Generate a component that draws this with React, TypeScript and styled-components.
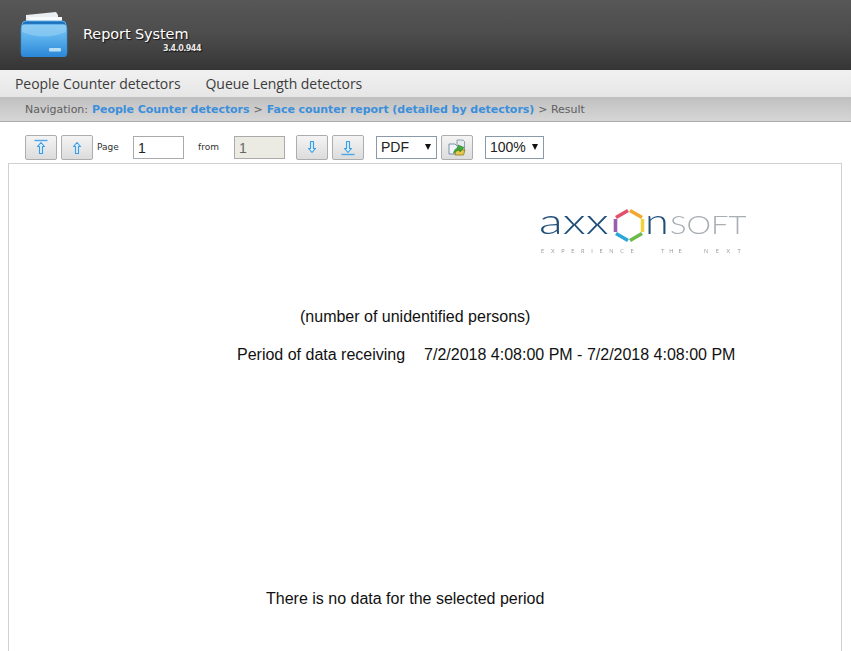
import React from 'react';
import styled, { createGlobalStyle } from 'styled-components';

const GlobalStyles = createGlobalStyle`
    html, body {
        margin: 0;
        padding: 0;
        background: #fff;
        overflow: hidden;
    }
`

const FolderLogo: React.FC = () => (
    <svg width="50" height="46" viewBox="0 0 50 46">
        <defs>
            <linearGradient id="folderBody" x1="0" y1="0" x2="0" y2="1">
                <stop offset="0" stopColor="#7cc4f2" />
                <stop offset="0.45" stopColor="#58aeea" />
                <stop offset="1" stopColor="#2a86d8" />
            </linearGradient>
        </defs>
        <path d="M6 12 L6 4 L36 1 L38 4 L38 12 Z" fill="#e9eef2" />
        <path d="M9 12 L9 6 L42 6 L42 12 Z" fill="#f7f9fa" />
        <path d="M2 18 L2 14 Q2 10 6 10 L42 10 Q46 10 46 14 L46 18 Z" fill="#1f6fb8" stroke="#5ab0ea" strokeWidth="1" />
        <rect x="1" y="13" width="46" height="33" rx="4" fill="url(#folderBody)" stroke="#2f8edc" strokeWidth="0.6" />
        <path d="M2 14 L46 14 L46 21 Q24 30 2 21 Z" fill="#9ad3f6" opacity="0.55" />
        <rect x="29" y="37" width="12" height="3.5" rx="1" fill="#b7def6" />
    </svg>
)

const ArrowIcon: React.FC<{ down?: boolean; bar?: boolean }> = ({ down, bar }) => (
    <svg width="14" height="17" viewBox="0 0 14 17">
        <g transform={down ? 'rotate(180 7 8.5)' : undefined}>
            {bar && <path d="M0.5 1.5 H13.5" stroke="#4aa6e8" strokeWidth="1.4" fill="none" />}
            <path
                d="M7 3.5 L3.5 7.5 H5.5 V14.5 H8.5 V7.5 H10.5 Z"
                fill="#d8effd"
                stroke="#3a9ce4"
                strokeWidth="1.1"
                strokeLinejoin="round"
            />
        </g>
    </svg>
)

const ExportIcon: React.FC = () => (
    <svg width="18" height="18" viewBox="0 0 18 18">
        <path d="M9 1 H15 L16.5 2.5 V11 H9 Z" fill="#e4ecf2" stroke="#7d8a94" strokeWidth="0.8" />
        <path d="M1 5 H7 L9.5 7.5 V15 H1 Z" fill="#eef4fa" stroke="#5f7890" strokeWidth="0.8" />
        <path d="M7 16 L8 11 H17 L15.5 16 Z" fill="#e6c84e" stroke="#8f7a25" strokeWidth="0.8" />
        <path d="M5.5 14.5 C6 11 8 9 10.5 8.5 L10 6 L16 8.5 L12 13 L11.5 10.8 C9.5 11 7.5 12.5 5.5 14.5 Z" fill="#3fae32" stroke="#27761f" strokeWidth="0.6" />
    </svg>
)

const AxxonLogo: React.FC = () => (
    <svg width="212" height="66" viewBox="0 -12 212 66">
        <g style={{ filter: 'blur(0.4px)' }}>
            <LogoWord transform="translate(3 27) scale(1.36 1)" fontSize="36" fontWeight="300" fill="#1f4e79">axx</LogoWord>
            <g fill="none" strokeWidth="3.6" strokeLinecap="butt">
                <path d="M92 3.5 L80 10.5" stroke="#e2506a" />
                <path d="M94 3.5 L106 10.5" stroke="#f2a72e" />
                <path d="M106.5 12 L106.5 25" stroke="#f0d23c" />
                <path d="M106 26.5 L94 33.5" stroke="#6cbb4a" />
                <path d="M92 33.5 L80 26.5" stroke="#2aa7d8" />
                <path d="M79.5 25 L79.5 12" stroke="#9a5db0" />
            </g>
            <LogoWord transform="translate(109 27) scale(1.2 1)" fontSize="36" fontWeight="300" fill="#1f4e79">n</LogoWord>
            <LogoWord transform="translate(134 27) scale(1.24 1)" fontSize="25" fontWeight="300" fill="#a9aeb3">SOFT</LogoWord>
            <LogoTag x="5" y="46" letterSpacing="6.7">EXPERIENCE</LogoTag>
            <LogoTag x="125" y="46" letterSpacing="5">THE</LogoTag>
            <LogoTag x="168" y="46" letterSpacing="7.5">NEXT</LogoTag>
        </g>
    </svg>
)

const App: React.FC = () => {
    return (
        <Root>
            <GlobalStyles />
            <Header>
                <LogoSlot>
                    <FolderLogo />
                </LogoSlot>
                <Brand>
                    <BrandTitle>Report System</BrandTitle>
                    <BrandVersion>3.4.0.944</BrandVersion>
                </Brand>
            </Header>
            <Menu>
                <MenuItem>People Counter detectors</MenuItem>
                <MenuItem>Queue Length detectors</MenuItem>
            </Menu>
            <Breadcrumbs>
                <span>Navigation:</span>
                <CrumbLink>People Counter detectors</CrumbLink>
                <span>&gt;</span>
                <CrumbLink>Face counter report (detailed by detectors)</CrumbLink>
                <span>&gt; Result</span>
            </Breadcrumbs>
            <Toolbar>
                <ToolButton><ArrowIcon bar /></ToolButton>
                <ToolButton $left={4}><ArrowIcon /></ToolButton>
                <SmallLabel $left={4} $width={36}>Page</SmallLabel>
                <PageInput defaultValue="1" />
                <SmallLabel $left={14} $width={36}>from</SmallLabel>
                <PageInput defaultValue="1" disabled />
                <ToolButton $left={11}><ArrowIcon down /></ToolButton>
                <ToolButton $left={4}><ArrowIcon down bar /></ToolButton>
                <FakeSelect $left={12} $width={61}>
                    PDF
                    <Caret />
                </FakeSelect>
                <ToolButton $left={4}><ExportIcon /></ToolButton>
                <FakeSelect $left={12} $width={59}>
                    100%
                    <Caret />
                </FakeSelect>
            </Toolbar>
            <ReportPage>
                <LogoRow>
                    <AxxonLogo />
                </LogoRow>
                <ReportLine $left={291} $top={47}>(number of unidentified persons)</ReportLine>
                <ReportLine $left={228} $top={20}>
                    Period of data receiving
                    <PeriodValue>7/2/2018 4:08:00 PM - 7/2/2018 4:08:00 PM</PeriodValue>
                </ReportLine>
                <ReportLine $left={257} $top={226}>There is no data for the selected period</ReportLine>
            </ReportPage>
        </Root>
    );
}

export default App;

const LogoWord = styled.text`
    font-family: Lato, sans-serif;
`

const LogoTag = styled.text`
    font-family: Lato, sans-serif;
    font-size: 5.5px;
    fill: #9a9ea2;
`

const Root = styled.div`
    width: 851px;
    height: 651px;
    overflow: hidden;
    background: #fff;
    display: flex;
    flex-direction: column;
`

const Header = styled.div`
    height: 70px;
    flex: none;
    display: flex;
    background: linear-gradient(to bottom, #575757 0%, #4c4c4c 50%, #353535 100%);
`

const LogoSlot = styled.div`
    margin: 11px 0 0 20px;
    height: 46px;
`

const Brand = styled.div`
    margin: 25px 0 0 13px;
    width: 118px;
    display: flex;
    flex-direction: column;
`

const BrandTitle = styled.div`
    font-family: Tahoma, "DejaVu Sans", sans-serif;
    font-size: 14.5px;
    line-height: 18px;
    letter-spacing: -0.1px;
    color: #fff;
    white-space: nowrap;
    text-shadow: 1px 1px 1px #111;
`

const BrandVersion = styled.div`
    margin-top: 1px;
    font-family: "DejaVu Sans", sans-serif;
    font-size: 8px;
    font-weight: 700;
    line-height: 10px;
    letter-spacing: -0.5px;
    color: #e8e8e8;
    text-align: right;
    text-shadow: 1px 1px 1px #111;
`

const Menu = styled.div`
    height: 27px;
    flex: none;
    display: flex;
    align-items: center;
    gap: 25px;
    padding-left: 15px;
    background: linear-gradient(to bottom, #f1f1f1, #e6e6e6);
`

const MenuItem = styled.div`
    font-family: "Open Sans", sans-serif;
    font-size: 14px;
    letter-spacing: -0.05px;
    color: #3c3c3c;
    white-space: nowrap;
`

const Breadcrumbs = styled.div`
    height: 25px;
    box-sizing: border-box;
    flex: none;
    display: flex;
    align-items: center;
    gap: 4px;
    padding-left: 25px;
    border-bottom: 1px solid #aaa;
    background: linear-gradient(to bottom, #c0c0c0, #d6d6d6);
    font-family: "DejaVu Sans", sans-serif;
    font-size: 11px;
    color: #606060;
    white-space: nowrap;
`

const CrumbLink = styled.span`
    font-weight: 700;
    letter-spacing: -0.05px;
    color: #3b8fdc;
`

const Toolbar = styled.div`
    height: 41px;
    box-sizing: border-box;
    flex: none;
    display: flex;
    align-items: flex-start;
    padding: 13px 0 0 25px;
`

const ToolButton = styled.div<{ $left?: number }>`
    width: 32px;
    height: 25px;
    box-sizing: border-box;
    margin-left: ${p => p.$left || 0}px;
    display: flex;
    align-items: center;
    justify-content: center;
    border: 1px solid #adadad;
    border-radius: 2px;
    background: linear-gradient(to bottom, #f4f4f4, #dcdcdc);
`

const SmallLabel = styled.div<{ $left: number; $width: number }>`
    width: ${p => p.$width}px;
    margin-left: ${p => p.$left}px;
    font-family: "DejaVu Sans", sans-serif;
    font-size: 9px;
    line-height: 25px;
    color: #333;
`

const PageInput = styled.input`
    width: 51px;
    height: 23px;
    box-sizing: border-box;
    margin: 1px 0 0;
    padding: 0 4px;
    border: 1px solid #aaa;
    border-radius: 0;
    outline: none;
    font-family: "Liberation Sans", sans-serif;
    font-size: 14px;
    color: #222;
    background: #fff;

    &:disabled {
        color: #666;
        background: #ebebe4;
    }
`

const FakeSelect = styled.div<{ $left: number; $width: number }>`
    width: ${p => p.$width}px;
    height: 23px;
    box-sizing: border-box;
    margin: 1px 0 0 ${p => p.$left}px;
    padding-left: 4px;
    position: relative;
    border: 1px solid #8a9aa8;
    font-family: "Liberation Sans", sans-serif;
    font-size: 14px;
    line-height: 21px;
    color: #222;
    background: #fff;
`

const Caret = styled.span`
    position: absolute;
    right: 5px;
    top: 7px;
    width: 0;
    height: 0;
    border-left: 3.5px solid transparent;
    border-right: 3.5px solid transparent;
    border-top: 6px solid #111;
`

const ReportPage = styled.div`
    margin: 0 9px 0 8px;
    flex: 1;
    box-sizing: border-box;
    border: 1px solid #d0d0d0;
    border-bottom: none;
    background: #fff;
`

const LogoRow = styled.div`
    display: flex;
    justify-content: flex-end;
    height: 66px;
    padding: 31px 93px 0 0;
`

const ReportLine = styled.div<{ $left: number; $top: number }>`
    margin: ${p => p.$top}px 0 0 ${p => p.$left}px;
    font-family: "Liberation Sans", sans-serif;
    font-size: 16px;
    line-height: 18px;
    color: #111;
    white-space: nowrap;
`

const PeriodValue = styled.span`
    margin-left: 19px;
`
